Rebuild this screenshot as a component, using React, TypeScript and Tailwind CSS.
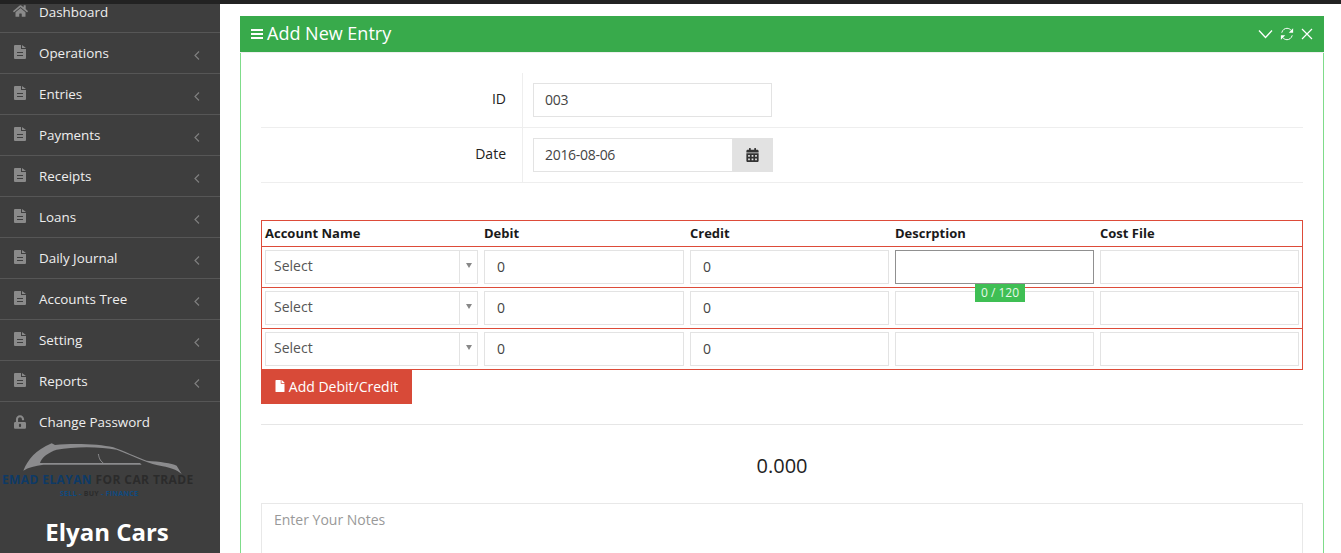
import { FaCalendarAlt, FaFile, FaHome, FaUnlockAlt } from 'react-icons/fa';

const menu = ['Operations', 'Entries', 'Payments', 'Receipts', 'Loans', 'Daily Journal', 'Accounts Tree', 'Setting', 'Reports'];

function Sidebar() {
  return (
    <aside className="w-[220px] shrink-0 bg-[#3e3e3e] text-[#eeeeee] text-[13.4px] overflow-hidden">
      <div className="-mt-[12px]">
        <div className="h-[41px] flex items-center border-b border-[#565656]">
          <FaHome className="ml-[13px] w-[15px] h-[14px] text-[#8a8a8a] -mt-[2px]" />
          <span className="ml-[11px]">Dashboard</span>
        </div>
        {menu.map((item) => (
          <div key={item} className="h-[41px] flex items-center border-b border-[#565656]">
            <svg viewBox="0 0 12 14" className="ml-[14px] w-[12px] h-[14px] -mt-[2px]" fill="#8a8a8a">
              <path
                fillRule="evenodd"
                d="M1 0 H7 V4 H12 V13 a1 1 0 0 1 -1 1 H1 a1 1 0 0 1 -1 -1 V1 a1 1 0 0 1 1 -1 Z M8 0 L12 3 H8 Z M3 7 V8 H9 V7 Z M3 10 V11 H9 V10 Z"
              />
            </svg>
            <span className="ml-[13px] flex-1">{item}</span>
            <svg viewBox="0 0 6 9" className="mr-[20px] w-[6px] h-[9px] mt-[4px]" fill="none" stroke="#7f7f7f" strokeWidth="1.2">
              <path d="M5 0.5 L1 4.5 L5 8.5" />
            </svg>
          </div>
        ))}
        <div className="h-[41px] flex items-center">
          <FaUnlockAlt className="ml-[14px] w-[12px] h-[14px] text-[#8a8a8a] -mt-[2px]" />
          <span className="ml-[13px]">Change Password</span>
        </div>
      </div>
      <div className="relative h-[73px]">
        <svg viewBox="0 0 600 195" className="absolute left-0 -top-[4px] w-[200px] h-[65px]">
          <path
            d="M70 95 C85 60 105 35 155 13 L165 18 C220 12 300 15 340 25 C370 35 410 55 440 65 C480 68 515 72 530 80 L545 105 C530 92 510 85 470 78 C440 70 395 50 350 32 C300 22 220 22 170 32 C145 40 125 55 120 72 L420 72 L425 77 L130 77 C105 80 85 85 70 95 Z"
            fill="#8b8b8d"
          />
          <path d="M295 45 C297 55 299 65 310 72" stroke="#8b8b8d" strokeWidth="3" fill="none" />
        </svg>
        <div className="absolute left-[2px] top-[29px] whitespace-nowrap text-[12px] leading-[16px] font-bold tracking-[0.4px]">
          <span className="text-[#0e3a66]">EMAD ELAYAN</span> <span className="text-[#2b2b2b]">FOR CAR TRADE</span>
        </div>
        <div className="absolute left-[60px] top-[47px] whitespace-nowrap text-[7px] leading-[8px] font-bold tracking-[0.3px] text-[#0f4a80]">
          SELL - <span className="text-[#2b2b2b]">BUY</span> - FINANCE
        </div>
      </div>
      <div className="text-center text-[24px] font-bold text-white leading-[32px] -ml-[6px]">Elyan Cars</div>
    </aside>
  );
}

function Field({ value, tight }: { value?: string; tight?: boolean }) {
  return (
    <div className={tight ? 'h-[34px] border border-[#e3e3e3] pl-[11px] pb-[2px] flex items-center text-[#444444] tracking-[-0.3px]' : 'h-[34px] border border-[#e3e3e3] pl-[12px] pb-[2px] flex items-center text-[#444444]'}>
      {value}
    </div>
  );
}

function SelectBox() {
  return (
    <div className="h-[34px] border border-[#e3e3e3] flex text-[#555555]">
      <span className="flex-1 pl-[8px] flex items-center pb-[3px]">Select</span>
      <span className="w-[18px] border-l border-[#e3e3e3] flex justify-center pt-[12px]">
        <span className="w-0 h-0 border-x-[3px] border-x-transparent border-t-[5px] border-t-[#888888]" />
      </span>
    </div>
  );
}

function EntryRow({ focused }: { focused?: boolean }) {
  return (
    <div className="h-[41px] grid grid-cols-[219px_206px_205px_205px_205px] pt-[3px] border-b border-[#dd4b39]">
      <div className="px-[3px]">
        <SelectBox />
      </div>
      <div className="px-[3px]">
        <Field value="0" />
      </div>
      <div className="px-[3px]">
        <Field value="0" />
      </div>
      <div className="px-[3px] relative">
        {focused ? <div className="h-[34px] border border-[#909090]" /> : <Field />}
        {focused && (
          <span className="absolute left-[83px] top-[34px] z-10 w-[50px] h-[18px] bg-[#3fbf54] text-[#e8f8ea] text-[12px] leading-[18px] text-center">
            0 / 120
          </span>
        )}
      </div>
      <div className="px-[3px]">
        <Field />
      </div>
    </div>
  );
}

function Panel() {
  return (
    <section className="border-x border-[#7fdc8a] h-[537px]">
      <header className="h-[37px] -mx-px bg-[#38aa4b] border-b border-[#eef0ee] text-white flex items-center pl-[11px] pr-[11px]">
        <svg viewBox="0 0 12 10" className="w-[12px] h-[10px]" fill="white">
          <rect x="0" y="0" width="12" height="2" />
          <rect x="0" y="4" width="12" height="2" />
          <rect x="0" y="8" width="12" height="2" />
        </svg>
        <h2 className="ml-[4px] flex-1 text-[18px] -mt-[1px]">Add New Entry</h2>
        <svg viewBox="0 0 15 10" className="w-[15px] h-[10px] mr-[7px]" fill="none" stroke="white" strokeWidth="1.3">
          <path d="M1 1.5 L7.5 8.5 L14 1.5" />
        </svg>
        <svg viewBox="0 0 16 16" className="w-[14px] h-[14px] mr-[7px]" fill="none" stroke="white" strokeWidth="1.1">
          <path d="M2 6.5 C3 3 5.5 1.5 8 1.5 C10 1.5 11.5 2.5 12.5 3.5" />
          <path d="M14 9.5 C13 13 10.5 14.5 8 14.5 C6 14.5 4.5 13.5 3.5 12.5" />
          <path d="M15 1.5 V6.5 H10 Z" fill="white" stroke="none" />
          <path d="M1 14.5 V9.5 H6 Z" fill="white" stroke="none" />
        </svg>
        <svg viewBox="0 0 12 12" className="w-[12px] h-[12px]" fill="none" stroke="white" strokeWidth="1.2">
          <path d="M1 1 L11 11 M11 1 L1 11" />
        </svg>
      </header>
      <div className="px-[20px] pt-[20px]">
        <div className="grid grid-cols-[262px_1fr] h-[55px] border-b border-[#eeeeee]">
          <label className="text-right pr-[16px] pt-[15px] border-r border-[#eeeeee] text-[#222222]">ID</label>
          <div className="pl-[10px] pt-[10px]">
            <div className="w-[239px]">
              <Field value="003" tight />
            </div>
          </div>
        </div>
        <div className="grid grid-cols-[262px_1fr] h-[55px] border-b border-[#eeeeee]">
          <label className="text-right pr-[16px] pt-[15px] border-r border-[#eeeeee] text-[#222222]">Date</label>
          <div className="pl-[10px] pt-[10px] flex items-start">
            <div className="w-[200px]">
              <Field value="2016-08-06" tight />
            </div>
            <span className="w-[40px] h-[34px] bg-[#e2e2e2] flex items-center justify-center pr-[2px] text-[#333333]">
              <FaCalendarAlt className="w-[13px] h-[14px]" />
            </span>
          </div>
        </div>
        <div className="mt-[37px] border border-b-0 border-[#dd4b39]">
          <div className="h-[26px] grid grid-cols-[219px_206px_205px_205px_205px] border-b border-[#dd4b39] text-[13px] font-bold text-[#1a1a1a] leading-[25px]">
            <span className="pl-[3px]">Account Name</span>
            <span className="pl-[3px]">Debit</span>
            <span className="pl-[3px]">Credit</span>
            <span className="pl-[3px]">Descrption</span>
            <span className="pl-[3px]">Cost File</span>
          </div>
          <EntryRow focused />
          <EntryRow />
          <EntryRow />
        </div>
        <button className="w-[151px] h-[34px] bg-[#d84a38] text-white flex items-center justify-center gap-[4px] pb-[2px]">
          <FaFile className="w-[10px] h-[12px]" />
          Add Debit/Credit
        </button>
        <hr className="mt-[20px] border-[#e6e6e6]" />
        <p className="mt-[27px] text-center text-[20px] leading-[28px] text-[#222222]">0.000</p>
        <div className="mt-[23px] h-[80px] border border-[#e8e8e8] px-[12px] py-[5px] text-[#999999]">Enter Your Notes</div>
      </div>
    </section>
  );
}

export default function App() {
  return (
    <div className="h-[553px] overflow-hidden bg-white text-[14px] font-['Open_Sans',sans-serif]">
      <div className="h-[4px] bg-[#222222]" />
      <div className="flex h-[549px]">
        <Sidebar />
        <main className="flex-1 pl-[20px] pr-[17px] pt-[12px] overflow-hidden">
          <Panel />
        </main>
      </div>
    </div>
  );
}
